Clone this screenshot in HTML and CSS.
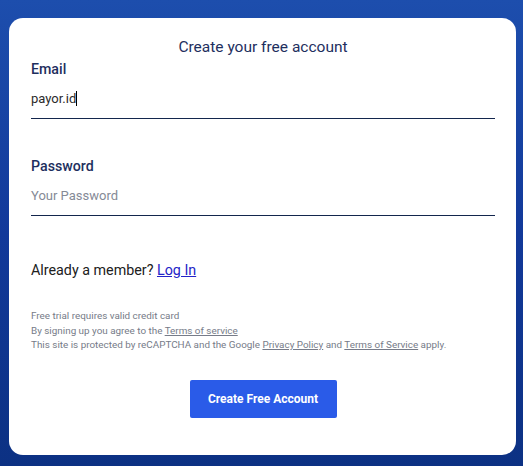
FILE: index.html
```html
<!DOCTYPE html>
<html>
<head>
<meta charset="utf-8">
<link rel="stylesheet" href="styles.css">
</head>
<body>
<div class="card">
  <h1 class="title">Create your free account</h1>
  <div class="field">
    <label class="label">Email</label>
    <div class="input"><span class="value">payor.id</span><span class="caret"></span></div>
  </div>
  <div class="field field-pw">
    <label class="label">Password</label>
    <div class="input"><span class="placeholder">Your Password</span></div>
  </div>
  <p class="member">Already a member? <a href="#" class="login">Log In</a></p>
  <div class="fine">
    <p>Free trial requires valid credit card</p>
    <p>By signing up you agree to the <a href="#">Terms of service</a></p>
    <p>This site is protected by reCAPTCHA and the Google <a href="#">Privacy Policy</a> and <a href="#">Terms of Service</a> apply.</p>
  </div>
  <div class="actions"><button class="btn">Create Free Account</button></div>
</div>
</body>
</html>
```
FILE: styles.css
```css
html, body { height: 100%; }
body {
  margin: 0;
  padding: 18px 7px 11px 9px;
  box-sizing: border-box;
  background: linear-gradient(180deg, #1d4ead 0%, #12399a 50%, #0c3183 100%);
  font-family: Roboto, "Liberation Sans", sans-serif;
}
.card {
  background: #fff;
  border-radius: 14px;
  height: 100%;
  box-sizing: border-box;
  padding: 20px 21px 0 22px;
}
.title {
  margin: 0;
  font-size: 15.5px;
  font-weight: 400;
  color: #1e2f5e;
  text-align: center;
  line-height: 19px;
}
.field { display: flex; flex-direction: column; }
.label {
  margin-top: 3px;
  font-size: 14.2px;
  line-height: 18px;
  color: #1e2f5e;
  font-weight: 500;
}
.input {
  height: 40px;
  border-bottom: 1px solid #13264d;
  display: flex;
  align-items: center;
  font-size: 13px;
}
.value { color: #2b2b2b; }
.caret { width: 1px; height: 15px; background: #000; }
.placeholder { color: #858a96; }
.field-pw { margin-top: 35px; }
.member {
  margin: 45px 0 0;
  font-size: 14.3px;
  color: #202020;
  line-height: 18px;
}
.login { color: #2323c8; }
.fine { margin-top: 30px; font-size: 9.9px; color: #767b88; line-height: 14.5px; }
.fine p { margin: 0; }
.fine a { color: #767b88; }
.actions { display: flex; justify-content: center; margin-top: 27px; }
.btn {
  width: 147px;
  height: 38px;
  border: none;
  border-radius: 2px;
  background: #2a5be8;
  color: #fff;
  font-family: Roboto, "Liberation Sans", sans-serif;
  font-weight: 700;
  font-size: 12px;
}
```
